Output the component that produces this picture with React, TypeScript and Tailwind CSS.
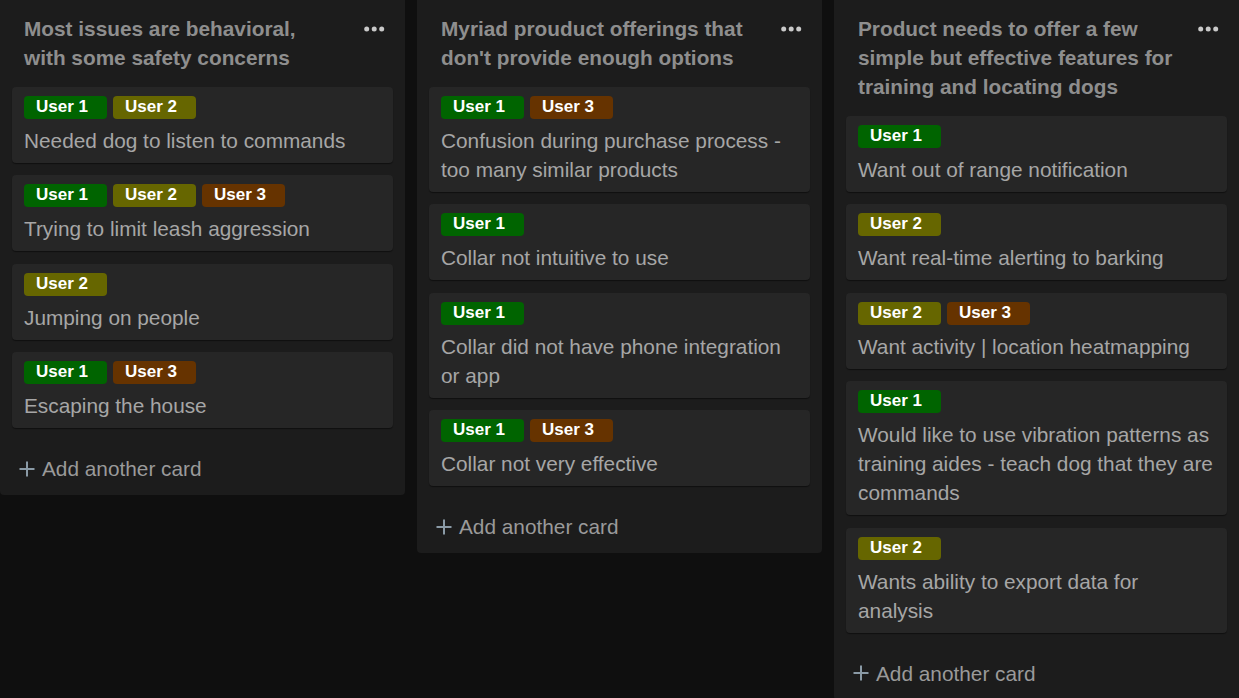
import React from "react";

type Label = "1" | "2" | "3";
type Card = { labels: Label[]; lines: string[] };
type Column = { title: string[]; cards: Card[] };

const labelBg: Record<Label, string> = {
  "1": "bg-[#006400]",
  "2": "bg-[#666600]",
  "3": "bg-[#663300]",
};

const columns: Column[] = [
  {
    title: ["Most issues are behavioral,", "with some safety concerns"],
    cards: [
      { labels: ["1", "2"], lines: ["Needed dog to listen to commands"] },
      { labels: ["1", "2", "3"], lines: ["Trying to limit leash aggression"] },
      { labels: ["2"], lines: ["Jumping on people"] },
      { labels: ["1", "3"], lines: ["Escaping the house"] },
    ],
  },
  {
    title: ["Myriad prouduct offerings that", "don't provide enough options"],
    cards: [
      {
        labels: ["1", "3"],
        lines: ["Confusion during purchase process -", "too many similar products"],
      },
      { labels: ["1"], lines: ["Collar not intuitive to use"] },
      {
        labels: ["1"],
        lines: ["Collar did not have phone integration", "or app"],
      },
      { labels: ["1", "3"], lines: ["Collar not very effective"] },
    ],
  },
  {
    title: [
      "Product needs to offer a few",
      "simple but effective features for",
      "training and locating dogs",
    ],
    cards: [
      { labels: ["1"], lines: ["Want out of range notification"] },
      { labels: ["2"], lines: ["Want real-time alerting to barking"] },
      { labels: ["2", "3"], lines: ["Want activity | location heatmapping"] },
      {
        labels: ["1"],
        lines: [
          "Would like to use vibration patterns as",
          "training aides - teach dog that they are",
          "commands",
        ],
      },
      {
        labels: ["2"],
        lines: ["Wants ability to export data for", "analysis"],
      },
    ],
  },
];

function Dots() {
  return (
    <svg width="21" height="6" viewBox="0 0 21 6" className="shrink-0">
      <circle cx="2.7" cy="3" r="2.5" fill="#c9c9c9" />
      <circle cx="10.2" cy="3" r="2.5" fill="#c9c9c9" />
      <circle cx="17.7" cy="3" r="2.5" fill="#c9c9c9" />
    </svg>
  );
}

function Plus() {
  return (
    <svg width="16" height="16" viewBox="0 0 16 16" className="shrink-0">
      <line x1="8" y1="0.5" x2="8" y2="15.5" stroke="#8a9aa6" strokeWidth="2" />
      <line x1="0.5" y1="8" x2="15.5" y2="8" stroke="#8a9aa6" strokeWidth="2" />
    </svg>
  );
}

function CardView({ card }: { card: Card }) {
  return (
    <div className="rounded-[4px] bg-[#262626] pt-[9px] pb-[8px] px-3 shadow-[0_1px_1px_rgba(0,0,0,0.45)]">
      <div className="flex gap-[6px]">
        {card.labels.map((l) => (
          <div
            key={l}
            className={`h-[23px] w-[83px] rounded-[4px] pl-[12px] text-[17px] font-bold leading-[22px] text-white ${labelBg[l]}`}
          >
            User {l}
          </div>
        ))}
      </div>
      <div className="mt-[7px] text-[20.8px] leading-[29px] text-[#a6a6a6]">
        {card.lines.map((line, i) => (
          <div key={i} className="whitespace-nowrap">
            {line}
          </div>
        ))}
      </div>
    </div>
  );
}

function ColumnView({ col }: { col: Column }) {
  return (
    <div className="w-[405px] shrink-0 self-start rounded-b-[4px] bg-[#1c1c1c] px-3 pt-[14px] pb-[12px]">
      <div className="flex justify-between pl-3 pr-2 mb-[15px]">
        <div className="text-[20.8px] font-bold leading-[29px] text-[#8e8e8e]">
          {col.title.map((t, i) => (
            <div key={i} className="whitespace-nowrap">
              {t}
            </div>
          ))}
        </div>
        <div className="flex h-[29px] items-center">
          <Dots />
        </div>
      </div>
      <div className="flex flex-col gap-[12.4px]">
        {col.cards.map((c, i) => (
          <CardView key={i} card={c} />
        ))}
      </div>
      <div className="mt-[26px] flex h-[29px] items-center gap-[7px] pl-[7px] text-[20.8px] leading-[29px] text-[#9a9a9a]">
        <Plus />
        <span>Add another card</span>
      </div>
    </div>
  );
}

export default function App() {
  return (
    <div
      className="flex h-[698px] w-[1239px] gap-3 overflow-hidden bg-[#0f0f0f]"
      style={{ fontFamily: '"Liberation Sans", Arial, sans-serif' }}
    >
      {columns.map((c, i) => (
        <ColumnView key={i} col={c} />
      ))}
    </div>
  );
}
